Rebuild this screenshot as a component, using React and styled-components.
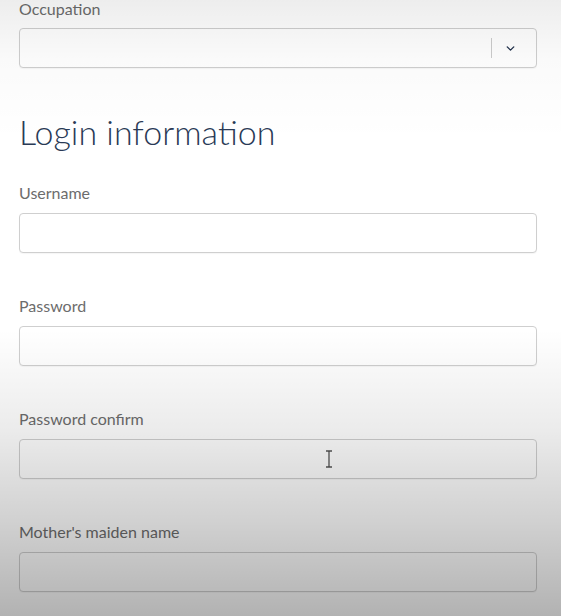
import React from "react";
import styled, { createGlobalStyle } from "styled-components";
import { ChevronDown } from "lucide-react";

const GlobalStyle = createGlobalStyle`
  html, body {
    margin: 0;
    padding: 0;
    background: #ffffff;
    font-family: Lato, "Open Sans", "Liberation Sans", sans-serif;
  }
`;

const Page = styled.div`
  position: relative;
  width: 561px;
  height: 616px;
  overflow: hidden;
  box-sizing: border-box;
  padding: 0 24px 0 19px;
`;

const Shade = styled.div`
  position: absolute;
  inset: 0;
  pointer-events: none;
  background: linear-gradient(
    to bottom,
    rgba(0, 0, 0, 0.07) 0px,
    rgba(0, 0, 0, 0.02) 60px,
    rgba(0, 0, 0, 0) 140px,
    rgba(0, 0, 0, 0) 330px,
    rgba(0, 0, 0, 0.08) 430px,
    rgba(0, 0, 0, 0.18) 520px,
    rgba(0, 0, 0, 0.3) 616px
  );
`;

const Field = styled.div`
  display: flex;
  flex-direction: column;
  margin-top: ${(p) => p.$top || 0}px;
`;

const Label = styled.label`
  font-size: 16px;
  line-height: 18px;
  color: #6c6c6c;
  margin-bottom: ${(p) => p.$gap || 11}px;
`;

const Box = styled.div`
  position: relative;
  height: 40px;
  box-sizing: border-box;
  border: 1px solid #cfcfcf;
  border-radius: 4px;
  background: #ffffff;
  box-shadow: 0 1px 1px rgba(0, 0, 0, 0.04);
  display: flex;
  align-items: center;
  justify-content: flex-end;
`;

const Divider = styled.div`
  width: 1px;
  height: 20px;
  background: #cccccc;
`;

const Arrow = styled.div`
  width: 36px;
  margin-right: 8px;
  display: flex;
  justify-content: center;
  align-items: center;
  color: #1f2f4a;
`;

const Heading = styled.h2`
  margin: 43px 0 31px;
  font-size: 34px;
  font-weight: 300;
  line-height: 42px;
  color: #2a3a56;
`;

const Cursor = styled.svg`
  position: absolute;
  left: 304px;
  top: 9px;
`;

const fields = ["Username", "Password", "Password confirm", "Mother's maiden name"];

export default function App() {
  return (
    <>
      <GlobalStyle />
      <Page>
        <Field>
          <Label $gap={10}>Occupation</Label>
          <Box>
            <Divider />
            <Arrow>
              <ChevronDown size={13} strokeWidth={2.5} />
            </Arrow>
          </Box>
        </Field>
        <Heading>Login information</Heading>
        {fields.map((name, i) => (
          <Field key={name} $top={i === 0 ? 0 : 44}>
            <Label>{name}</Label>
            <Box>
              {name === "Password confirm" && (
                <Cursor width="10" height="20" viewBox="0 0 10 20">
                  <path
                    d="M2 2h2.5l0.5 1 0.5-1H8M5 3v14M2 18h2.5l0.5-1 0.5 1H8"
                    fill="none"
                    stroke="#555"
                    strokeWidth="1.3"
                  />
                </Cursor>
              )}
            </Box>
          </Field>
        ))}
        <Shade />
      </Page>
    </>
  );
}
